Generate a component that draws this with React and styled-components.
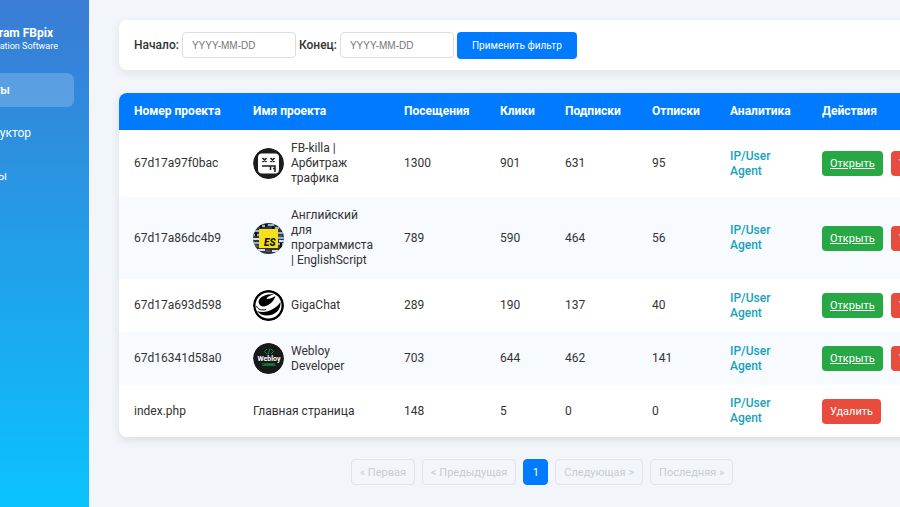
import React from "react";
import styled, { createGlobalStyle, css } from "styled-components";

const Global = createGlobalStyle`
  * { box-sizing: border-box; }
  body {
    margin: 0;
    background: #f2f6fa;
    color: #333;
    font: 12px/15px Roboto, "Noto Sans", sans-serif;
    overflow: hidden;
  }
  button, input { font-family: inherit; }
`;

const Shell = styled.div`
  display: flex;
  min-height: 100vh;
  overflow: hidden;
`;

const Sidebar = styled.aside`
  flex: 0 0 89px;
  min-height: 100vh;
  overflow: hidden;
  background: linear-gradient(180deg, #3a7bd5, #0ac3fd);
  color: #fff;
`;

const Brand = styled.div`
  padding: 26px 31px 0 0;
  display: flex;
  flex-direction: column;
  align-items: flex-end;
  white-space: nowrap;
`;

const BrandName = styled.strong`
  padding-right: 5px;
  font-size: 12px;
  line-height: 14px;
  font-weight: 700;
`;

const BrandNote = styled.span`
  font-size: 9px;
  line-height: 12px;
`;

const Nav = styled.nav`
  display: flex;
  flex-direction: column;
  gap: 9px;
  margin: 21px 15px 0 0;
`;

const NavLink = styled.a`
  display: flex;
  justify-content: flex-end;
  align-items: center;
  height: 34px;
  padding-right: ${(p) => p.$inset};
  border-radius: 0 7px 7px 0;
  color: #fff;
  font-size: 12px;
  font-weight: ${(p) => (p.$active ? 500 : 400)};
  text-decoration: none;
  white-space: nowrap;
  background: ${(p) => (p.$active ? "rgba(255, 255, 255, 0.2)" : "transparent")};
`;

const Main = styled.main`
  flex: 0 0 auto;
  width: calc(100% + 6px);
  padding: 20px 30px;
`;

const Filter = styled.form`
  display: flex;
  align-items: center;
  gap: 3px;
  height: 50px;
  padding: 0 15px;
  margin-bottom: 23px;
  border-radius: 8px;
  background: #fff;
  box-shadow: 0 3px 10px rgba(0, 0, 0, 0.08);
`;

const Label = styled.label`
  font-size: 12px;
  font-weight: 500;
`;

const DateInput = styled.input`
  width: 114px;
  height: 26px;
  padding: 0 9px;
  border: 1px solid #ddd;
  border-radius: 4px;
  background: #fff;
  font-family: "Liberation Sans", Arial, sans-serif;
  font-size: 10px;
  &::placeholder { color: #757575; }
`;

const buttonBase = css`
  display: inline-flex;
  align-items: center;
  justify-content: center;
  border: 0;
  border-radius: 4px;
  color: #fff;
  cursor: pointer;
`;

const ApplyButton = styled.button`
  ${buttonBase}
  height: 27px;
  padding: 0 15px;
  background: #007bff;
  font-size: 10px;
`;

const TableCard = styled.div`
  overflow: hidden;
  border-radius: 8px;
  background: #fff;
  box-shadow: 0 3px 10px rgba(0, 0, 0, 0.1);
`;

const Table = styled.table`
  width: 100%;
  table-layout: fixed;
  border-collapse: collapse;
`;

const Col = styled.col`
  width: ${(p) => p.$width};
`;

const Th = styled.th`
  padding: 11px 15px;
  background: #007bff;
  color: #fff;
  font-weight: 700;
  text-align: left;
  white-space: nowrap;
`;

const Tr = styled.tr`
  &:nth-child(even) { background: #f7faff; }
`;

const Td = styled.td`
  padding: 11px 15px;
  vertical-align: middle;
  white-space: ${(p) => (p.$nowrap ? "nowrap" : "normal")};
`;

const Project = styled.div`
  display: flex;
  align-items: center;
  gap: 7px;
`;

const Avatar = styled.svg`
  flex: none;
  width: 31px;
  height: 31px;
  border-radius: 50%;
`;

const AgentLink = styled.a`
  color: #17a2b8;
  font-weight: 500;
  text-decoration: none;
`;

const Actions = styled.div`
  display: flex;
  gap: 8px;
`;

const OpenLink = styled.a`
  ${buttonBase}
  height: 25px;
  padding: 0 8px;
  background: #28a745;
  font-size: 11px;
  text-decoration: underline;
`;

const DeleteButton = styled.button`
  ${buttonBase}
  height: 25px;
  padding: 0 8px;
  background: #e74c3c;
  font-size: 11px;
`;

const Pagination = styled.nav`
  display: flex;
  justify-content: center;
  gap: 7px;
  margin-top: 22px;
`;

const PageButton = styled.button`
  height: 26px;
  padding: 0 8px;
  min-width: 25px;
  border: 1px solid ${(p) => (p.$current ? "#007bff" : "#dfe3e7")};
  border-radius: 4px;
  background: ${(p) => (p.$current ? "#007bff" : "transparent")};
  color: ${(p) => (p.$current ? "#fff" : "#c8cccf")};
  font-size: 11px;
`;

function KillaAvatar() {
  return (
    <Avatar viewBox="0 0 31 31" aria-hidden="true">
      <circle cx="15.5" cy="15.5" r="15.5" fill="#1c1c1c" />
      <rect x="5" y="5.5" width="21" height="20" rx="4" fill="#fff" />
      <path d="M9.500 10l4 4m0-4l-4 4M17.500 10l4 4m0-4l-4 4" stroke="#1c1c1c" strokeWidth="1.700" />
      <path d="M9 18H22V24M17.500 18V22M20 20.500h2" fill="none" stroke="#1c1c1c" strokeWidth="1.500" />
    </Avatar>
  );
}

function EnglishAvatar() {
  return (
    <Avatar viewBox="0 0 31 31" aria-hidden="true">
      <rect width="31" height="31" fill="#30363b" />
      <path d="M0 8h6M1 12h5M0 20h6M25 10h6M25 15h6M25 21h5M7 3h5M15 2h6M22 5h4" stroke="#8fb5c9" strokeWidth="2" />
      <path d="M0 16h6M26 18h5M5 27h7M19 28h6" stroke="#d9e2ea" strokeWidth="2" />
      <path d="M1 23h6M25 13h4M13 28h4" stroke="#8064a0" strokeWidth="1" />
      <path d="M8 1v4M13 1v3M20 3v3M3 9v4M28 20v5" stroke="#111" strokeWidth="2" />
      <rect x="6" y="6" width="19" height="19" fill="#f8df1d" />
      <text x="11" y="23" fontFamily="Roboto, sans-serif" fontSize="10" fontWeight="900" fontStyle="italic" fill="#111">ES</text>
    </Avatar>
  );
}

function GigaAvatar() {
  return (
    <Avatar viewBox="0 0 31 31" aria-hidden="true">
      <circle cx="15.5" cy="15.5" r="15.5" fill="#000" />
      <circle cx="15.5" cy="15.5" r="13" fill="#fff" />
      <path d="M5.500 12C6 7 12 4 21 4C17 5.500 14 7 13.500 9C16 9.500 20 7.500 22.500 6C21 11 16 16 11 16.500C8 16.500 6 15 5.500 12Z" fill="#000" />
      <path d="M4 21C13 24 23 19 27.500 12C28 20 22 25.500 14 25.500C9 25.500 6 23.500 4 21Z" fill="#000" />
      <path d="M3.500 16C5 20 9 20.500 13 19.500" fill="none" stroke="#000" strokeWidth="1" />
    </Avatar>
  );
}

function WebloyAvatar() {
  return (
    <Avatar viewBox="0 0 31 31" aria-hidden="true">
      <circle cx="15.5" cy="15.5" r="15.5" fill="#171a16" />
      <path d="M14 6l-2.500 2.500L14 11M18 6l2.500 2.500L18 11M17 5.500l-2 6" fill="none" stroke="#148653" strokeWidth="1" />
      <text x="16" y="18" textAnchor="middle" fontFamily="Roboto, sans-serif" fontSize="7" fontWeight="700" fill="#fff">Webloy</text>
      <text x="16" y="23" textAnchor="middle" fontFamily="Roboto, sans-serif" fontSize="3" fontWeight="900" fill="#08ad4d">CHANNEL</text>
    </Avatar>
  );
}

const columns = [
  ["Номер проекта", "119px"],
  ["Имя проекта", "151px"],
  ["Посещения", "96px"],
  ["Клики", "65px"],
  ["Подписки", "87px"],
  ["Отписки", "78px"],
  ["Аналитика", "92px"],
  ["Действия", "auto"],
];

const projects = [
  { id: "67d17a97f0bac", name: "FB-killa | Арбитраж трафика", icon: KillaAvatar, stats: [1300, 901, 631, 95] },
  { id: "67d17a86dc4b9", name: "Английский для программиста | EnglishScript", icon: EnglishAvatar, stats: [789, 590, 464, 56] },
  { id: "67d17a693d598", name: "GigaChat", icon: GigaAvatar, stats: [289, 190, 137, 40] },
  { id: "67d16341d58a0", name: "Webloy Developer", icon: WebloyAvatar, stats: [703, 644, 462, 141] },
  { id: "index.php", name: "Главная страница", stats: [148, 5, 0, 0] },
];

export default function App() {
  return (
    <>
      <Global />
      <Shell>
        <Sidebar>
          <Brand>
            <BrandName>ram FBpix</BrandName>
            <BrandNote>ation Software</BrandNote>
          </Brand>
          <Nav>
            <NavLink href="#projects" $active $inset="64px">ты</NavLink>
            <NavLink href="#builder" $inset="43px">уктор</NavLink>
            <NavLink href="#more" $inset="67px">ы</NavLink>
          </Nav>
        </Sidebar>
        <Main>
          <Filter onSubmit={(e) => e.preventDefault()}>
            <Label htmlFor="start">Начало:</Label>
            <DateInput id="start" placeholder="YYYY-MM-DD" />
            <Label htmlFor="end">Конец:</Label>
            <DateInput id="end" placeholder="YYYY-MM-DD" />
            <ApplyButton type="submit">Применить фильтр</ApplyButton>
          </Filter>
          <TableCard>
            <Table>
              <colgroup>
                {columns.map(([title, width]) => <Col key={title} $width={width} />)}
              </colgroup>
              <thead>
                <tr>{columns.map(([title]) => <Th key={title} scope="col">{title}</Th>)}</tr>
              </thead>
              <tbody>
                {projects.map(({ id, name, icon: Icon, stats }) => (
                  <Tr key={id}>
                    <Td>{id}</Td>
                    <Td $nowrap={!Icon}>
                      {Icon ? <Project><Icon /><span>{name}</span></Project> : name}
                    </Td>
                    {stats.map((value, i) => <Td key={i}>{value}</Td>)}
                    <Td><AgentLink href="#agents">IP/User Agent</AgentLink></Td>
                    <Td>
                      <Actions>
                        {Icon && <OpenLink href="#open">Открыть</OpenLink>}
                        <DeleteButton type="button">Удалить</DeleteButton>
                      </Actions>
                    </Td>
                  </Tr>
                ))}
              </tbody>
            </Table>
          </TableCard>
          <Pagination aria-label="Страницы">
            <PageButton disabled>« Первая</PageButton>
            <PageButton disabled>&lt; Предыдущая</PageButton>
            <PageButton $current aria-current="page">1</PageButton>
            <PageButton disabled>Следующая &gt;</PageButton>
            <PageButton disabled>Последняя »</PageButton>
          </Pagination>
        </Main>
      </Shell>
    </>
  );
}
